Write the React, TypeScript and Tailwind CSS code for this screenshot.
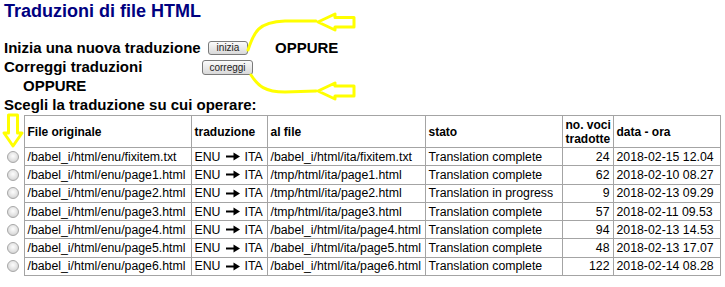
import React from 'react'

type Row = {
  src: string
  dest: string
  status: string
  count: number
  date: string
}

const ROWS: Row[] = [
  { src: '/babel_i/html/enu/fixitem.txt', dest: '/babel_i/html/ita/fixitem.txt', status: 'Translation complete', count: 24, date: '2018-02-15 12.04' },
  { src: '/babel_i/html/enu/page1.html', dest: '/tmp/html/ita/page1.html', status: 'Translation complete', count: 62, date: '2018-02-10 08.27' },
  { src: '/babel_i/html/enu/page2.html', dest: '/tmp/html/ita/page2.html', status: 'Translation in progress', count: 9, date: '2018-02-13 09.29' },
  { src: '/babel_i/html/enu/page3.html', dest: '/tmp/html/ita/page3.html', status: 'Translation complete', count: 57, date: '2018-02-11 09.53' },
  { src: '/babel_i/html/enu/page4.html', dest: '/babel_i/html/ita/page4.html', status: 'Translation complete', count: 94, date: '2018-02-13 14.53' },
  { src: '/babel_i/html/enu/page5.html', dest: '/babel_i/html/ita/page5.html', status: 'Translation complete', count: 48, date: '2018-02-13 17.07' },
  { src: '/babel_i/html/enu/page6.html', dest: '/babel_i/html/ita/page6.html', status: 'Translation complete', count: 122, date: '2018-02-14 08.28' },
]

const cell = 'border border-[#a4a4a4] px-[3px] align-middle whitespace-nowrap'

function OldButton({ label, className }: { label: string; className: string }) {
  return (
    <button
      type="button"
      className={`flex items-center justify-center rounded-[3px] border border-[#7a7a7a] bg-gradient-to-b from-[#fbfbfb] to-[#d9d9d9] text-[10px] font-normal leading-none text-[#222] ${className}`}
    >
      {label}
    </button>
  )
}

function Radio() {
  return (
    <span className="block h-[12px] w-[12px] rounded-full border border-[#a8a8a8] bg-[radial-gradient(circle_at_50%_40%,#fdfdfd,#e2e2e2_55%,#c4c4c4)]" />
  )
}

function RightArrow() {
  return (
    <svg width="14" height="9" viewBox="0 0 14 9" className="ml-[6px] mr-[4px] inline-block">
      <path d="M0 4.5h9" stroke="#000" strokeWidth="2" />
      <path d="M7.5 0.5 14 4.5 7.5 8.5z" fill="#000" />
    </svg>
  )
}

// yellow hand-drawn markings placed over the page
function Annotations() {
  const y = '#ffff00'
  return (
    <svg width="725" height="287" className="pointer-events-none absolute left-0 top-0">
      <path d="M248 50 C254 32 258 22 285 21 L316 21" fill="none" stroke={y} strokeWidth="3" strokeLinecap="round" />
      <path d="M318 22 L335 14 L335 17.5 L354 17.5 L354 27 L335 27 L335 30 Z" fill="none" stroke={y} strokeWidth="3" strokeLinejoin="round" />
      <path d="M251 75 C258 86 265 92 285 92 L316 91" fill="none" stroke={y} strokeWidth="3" strokeLinecap="round" />
      <path d="M318 91 L335 83 L335 86 L354 86 L354 96 L335 96 L335 99 Z" fill="none" stroke={y} strokeWidth="3" strokeLinejoin="round" />
      <path d="M8.5 115 L17.5 115 L17.5 133 L22 133 L13 146 L4 133 L8.5 133 Z" fill="none" stroke={y} strokeWidth="3" strokeLinejoin="round" />
    </svg>
  )
}

export default function App() {
  return (
    <div className="relative h-[287px] w-[725px] overflow-hidden bg-white px-[4px] font-['Liberation_Sans',Arial,sans-serif] text-black">
      <h1 className="text-[18px] font-bold leading-[22px] text-[#000080]">Traduzioni di file HTML</h1>

      <div className="mt-[16px] text-[15px] font-bold leading-[19px]">
        <div className="flex h-[19px] items-center">
          <span className="w-[204px]">Inizia una nuova traduzione</span>
          <OldButton label="inizia" className="h-[14px] w-[40px]" />
          <span className="ml-[27px]">OPPURE</span>
        </div>
        <div className="flex h-[19px] items-center">
          <span className="w-[198px]">Correggi traduzioni</span>
          <OldButton label="correggi" className="mt-[2px] h-[15px] w-[51px]" />
        </div>
        <div className="pl-[19px]">OPPURE</div>
        <div>Scegli la traduzione su cui operare:</div>
      </div>

      <table className="mt-px w-[716px] table-fixed border-collapse text-[12.3px] leading-[14px]">
        <colgroup>
          <col className="w-[20px]" />
          <col className="w-[167px]" />
          <col className="w-[76px]" />
          <col className="w-[158px]" />
          <col className="w-[137px]" />
          <col className="w-[51px]" />
          <col className="w-[107px]" />
        </colgroup>
        <thead>
          <tr className="h-[32px] text-left text-[12px] font-bold">
            <th />
            <th className={cell}>File originale</th>
            <th className={cell}>traduzione</th>
            <th className={cell}>al file</th>
            <th className={cell}>stato</th>
            <th className={cell}>
              no. voci
              <br />
              tradotte
            </th>
            <th className={cell}>data - ora</th>
          </tr>
        </thead>
        <tbody>
          {ROWS.map((r) => (
            <tr key={r.src} className="h-[18.3px]">
              <td className="pl-[3px] align-middle">
                <Radio />
              </td>
              <td className={cell}>{r.src}</td>
              <td className={`${cell} pr-0`}>
                <span className="inline-flex items-center">
                  ENU
                  <RightArrow />
                  ITA
                </span>
              </td>
              <td className={cell}>{r.dest}</td>
              <td className={cell}>{r.status}</td>
              <td className={`${cell} text-right`}>{r.count}</td>
              <td className={cell}>{r.date}</td>
            </tr>
          ))}
        </tbody>
      </table>

      <Annotations />
    </div>
  )
}
